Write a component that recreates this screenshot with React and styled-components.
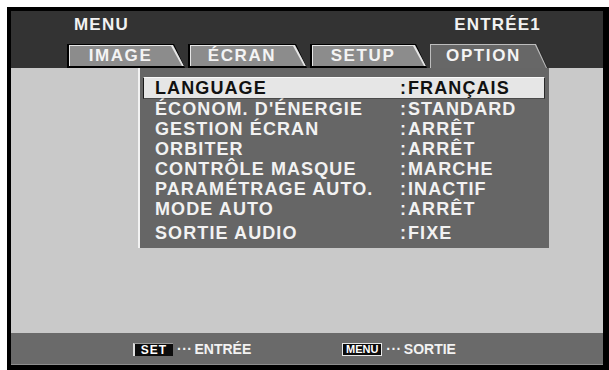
import React from "react";
import styled, { createGlobalStyle, css } from "styled-components";

const GlobalStyle = createGlobalStyle`
  html, body { margin: 0; padding: 0; background: #fff; }
  body { font-family: "Liberation Sans", Arial, Helvetica, sans-serif; }
`;

const Screen = styled.div`
  margin: 7px 0 0 7px;
  width: 602px;
  height: 363px;
  box-sizing: border-box;
  border-style: solid;
  border-color: #000;
  border-width: 4px 6px 5px 4px;
  background: #c9c9c9;
  display: flex;
  flex-direction: column;
  font-weight: 700;
`;

const Header = styled.div`
  background: #333333;
  padding: 4px 55px 0 56px;
`;

const TitleRow = styled.div`
  display: flex;
  justify-content: space-between;
  padding: 0 7px 0 7px;
  height: 20px;
  line-height: 20px;
  font-size: 17px;
  letter-spacing: 1.2px;
  color: #f2f2f2;
`;

const Tabs = styled.div`
  display: flex;
  gap: 3px;
  margin-top: 9px;
  height: 24px;
`;

const tabShape = `polygon(0 0, calc(100% - 11px) 0, 100% 100%, 0 100%)`;

const Tab = styled.div`
  position: relative;
  width: ${(p) => p.$w}px;
  height: 24px;
  clip-path: ${tabShape};
  background: #000;
  color: #f4f4f4;
  font-size: 17px;
  letter-spacing: 1.6px;
  line-height: 24px;
  text-align: center;
  padding-right: 11px;
  box-sizing: border-box;

  &::before {
    content: "";
    position: absolute;
    inset: 1px 1px 2px 2px;
    clip-path: ${tabShape};
    background: #e6e6e6;
  }
  &::after {
    content: "";
    position: absolute;
    inset: 2px 3px 2px 3px;
    clip-path: ${tabShape};
    background: #8c8c8c;
  }

  ${(p) =>
    p.$active &&
    css`
      background: #2a2a2a;
      &::before {
        inset: 0 1px 0 0;
        background: #bdbdbd;
      }
      &::after {
        inset: 1px 2px 0 1px;
        background: #676767;
      }
    `}
`;

const TabLabel = styled.span`
  position: relative;
  z-index: 1;
`;

const Body = styled.div`
  flex: 1;
  display: flex;
  flex-direction: column;
`;

const Panel = styled.div`
  margin-left: 127px;
  width: 411px;
  box-sizing: border-box;
  background: #666666;
  border-left: 2px solid #f2f2f2;
  padding: 9px 4px 5px 3px;
  display: flex;
  flex-direction: column;
`;

const Row = styled.div`
  display: grid;
  grid-template-columns: 245px 1fr;
  height: 20px;
  line-height: 20px;
  padding-left: 12px;
  font-size: 18px;
  letter-spacing: 1.1px;
  color: #f2f2f2;
  white-space: nowrap;
  ${(p) =>
    p.$selected &&
    css`
      height: 22px;
      box-sizing: border-box;
      padding-left: 11px;
      background: #e6e6e6;
      color: #111;
      border: 1px solid;
      border-color: #fafafa #2a2a2a #4a4a4a #1a1a1a;
    `}
  ${(p) =>
    p.$spaced &&
    css`
      margin-top: 4px;
    `}
`;

const Value = styled.span`
  display: flex;
`;

const Colon = styled.span`
  margin-right: 2px;
  letter-spacing: 0;
`;

const Spacer = styled.div`
  flex: 1;
`;

const Footer = styled.div`
  height: 32px;
  box-sizing: border-box;
  background: #6a6a6a;
  border-bottom: 1px solid #8e8e8e;
  display: flex;
  align-items: center;
  gap: 91px;
  padding-left: 122px;
  padding-top: 1px;
`;

const Hint = styled.div`
  display: flex;
  align-items: center;
  color: #f2f2f2;
  font-size: 14px;
  line-height: 16px;
`;

const Key = styled.span`
  width: 40px;
  height: 13px;
  box-sizing: border-box;
  background: #0c0c0c;
  color: #fff;
  font-size: ${(p) => (p.$small ? 11 : 12)}px;
  letter-spacing: ${(p) => (p.$small ? 0 : 1)}px;
  line-height: 12px;
  display: flex;
  align-items: center;
  justify-content: center;
  ${(p) =>
    p.$outlined
      ? css`
          border: 1px solid #e8e8e8;
        `
      : css`
          border-left: 2px solid #e0e0e0;
          border-top: 1px solid #9a9a9a;
        `}
`;

const Dots = styled.span`
  margin: 0 2px 0 4px;
  letter-spacing: 0.5px;
`;

const items = [
  ["LANGUAGE", "FRANÇAIS"],
  ["ÉCONOM. D'ÉNERGIE", "STANDARD"],
  ["GESTION ÉCRAN", "ARRÊT"],
  ["ORBITER", "ARRÊT"],
  ["CONTRÔLE MASQUE", "MARCHE"],
  ["PARAMÉTRAGE AUTO.", "INACTIF"],
  ["MODE AUTO", "ARRÊT"],
  ["SORTIE AUDIO", "FIXE"],
];

const tabs = [
  ["IMAGE", 118],
  ["ÉCRAN", 119],
  ["SETUP", 117],
  ["OPTION", 118, true],
];

export default function App() {
  return (
    <>
      <GlobalStyle />
      <Screen>
        <Header>
          <TitleRow>
            <span>MENU</span>
            <span>ENTRÉE1</span>
          </TitleRow>
          <Tabs>
            {tabs.map(([label, w, active]) => (
              <Tab key={label} $w={w} $active={active}>
                <TabLabel>{label}</TabLabel>
              </Tab>
            ))}
          </Tabs>
        </Header>
        <Body>
          <Panel>
            {items.map(([label, value], i) => (
              <Row key={label} $selected={i === 0} $spaced={i === items.length - 1}>
                <span>{label}</span>
                <Value>
                  <Colon>:</Colon>
                  {value}
                </Value>
              </Row>
            ))}
          </Panel>
          <Spacer />
          <Footer>
            <Hint>
              <Key>SET</Key>
              <Dots>···</Dots>
              ENTRÉE
            </Hint>
            <Hint>
              <Key $outlined $small>MENU</Key>
              <Dots>···</Dots>
              SORTIE
            </Hint>
          </Footer>
        </Body>
      </Screen>
    </>
  );
}
